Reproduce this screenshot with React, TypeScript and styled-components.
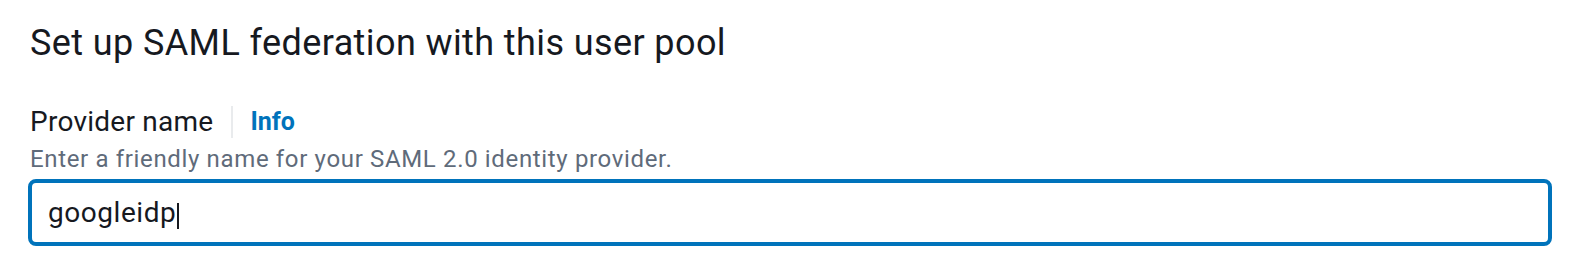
import React from "react";
import styled, { createGlobalStyle } from "styled-components";

const GlobalStyle = createGlobalStyle`
  body {
    margin: 0;
    background: #ffffff;
    font-family: Roboto, "Noto Sans", sans-serif;
    color: #16191f;
  }
`;

const Page = styled.div`
  padding: 21px 30px 0 28px;
`;

const Heading = styled.h2`
  margin: 0;
  padding-left: 2px;
  font-size: 36px;
  line-height: 44px;
  font-weight: 400;
  letter-spacing: 0.4px;
  color: #16191f;
`;

const Field = styled.div`
  display: flex;
  flex-direction: column;
  margin-top: 39px;
`;

const LabelRow = styled.div`
  display: flex;
  align-items: center;
  height: 36px;
  padding-left: 2px;
`;

const Label = styled.label`
  font-size: 28px;
  line-height: 36px;
  letter-spacing: 0.25px;
  color: #16191f;
`;

const Divider = styled.span`
  width: 2px;
  height: 32px;
  margin: 0 17px 0 18px;
  background: #e9ebed;
`;

const InfoLink = styled.a`
  font-size: 25px;
  line-height: 36px;
  font-weight: 700;
  color: #0073bb;
  text-decoration: none;
  cursor: pointer;
`;

const Description = styled.div`
  margin-top: 3px;
  padding-left: 2px;
  font-size: 24px;
  line-height: 32px;
  letter-spacing: 0.65px;
  color: #5f6b7a;
`;

const InputBox = styled.div`
  margin-top: 4px;
  height: 67px;
  box-sizing: border-box;
  border: 4px solid #0073bb;
  border-radius: 8px;
  padding: 12px 16px 0 16px;
  font-size: 28px;
  line-height: 36px;
  letter-spacing: 0.55px;
  color: #16191f;
`;

const Caret = styled.span`
  display: inline-block;
  width: 2px;
  height: 26px;
  margin-left: 1px;
  vertical-align: -7px;
  background: #16191f;
`;

export default function App() {
  return (
    <>
      <GlobalStyle />
      <Page>
        <Heading>Set up SAML federation with this user pool</Heading>
        <Field>
          <LabelRow>
            <Label>Provider name</Label>
            <Divider />
            <InfoLink>Info</InfoLink>
          </LabelRow>
          <Description>Enter a friendly name for your SAML 2.0 identity provider.</Description>
          <InputBox>
            googleidp
            <Caret />
          </InputBox>
        </Field>
      </Page>
    </>
  );
}
